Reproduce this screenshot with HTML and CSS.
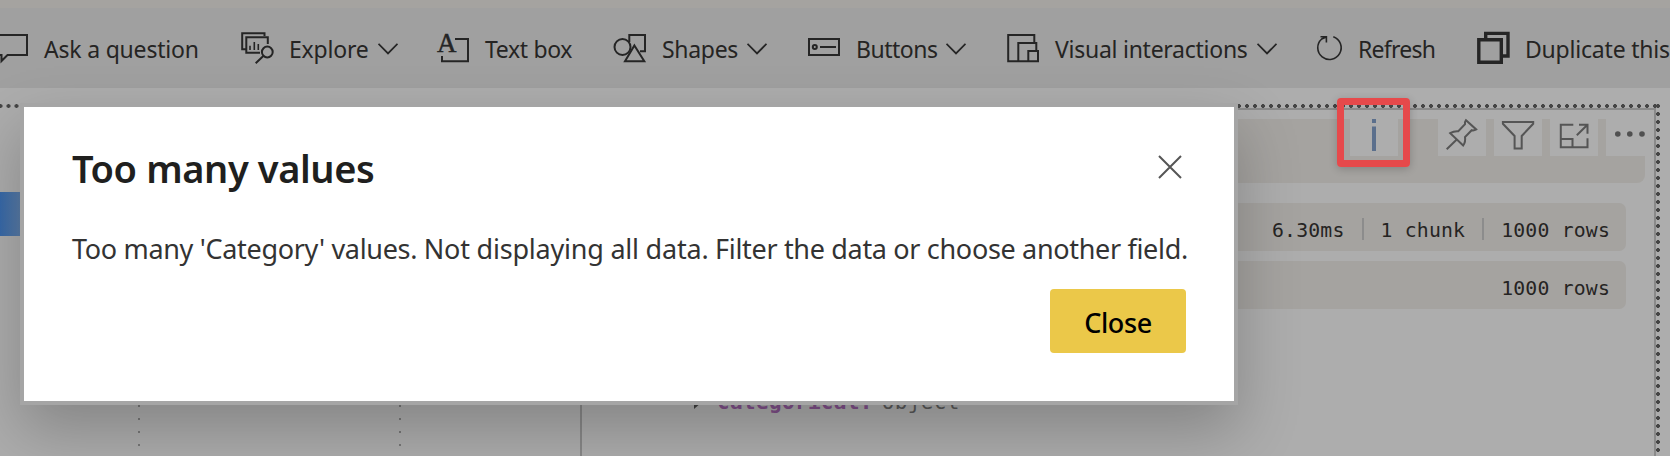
FILE: index.html
```
<!DOCTYPE html>
<html lang="en">
<head>
<meta charset="utf-8">
<title>Too many values</title>
<link rel="stylesheet" href="styles.css">
</head>
<body>
<div class="app">
  <div class="strip"></div>
  <nav class="toolbar">
    <div class="tool">
      <svg class="icon" viewBox="0 0 33 36"><path d="M1 5H31V25H11.5L5.5 31V25H1Z"/></svg>
      <span class="label ask">Ask a question</span>
    </div>
    <div class="tool">
      <svg class="icon" viewBox="0 0 33 36"><path d="M4.5 19.3H1.2V3.2H23.5V6M19 22.8H5.3V7.3H26.8V14M22.3 26L14.7 33.3"/><circle cx="26.3" cy="22" r="5.4"/><path class="thin" d="M9 20V15.7M13.3 20V12M17.3 20V14"/></svg>
      <span class="label explore">Explore</span>
      <svg class="chevron" viewBox="0 0 20 12"><path d="M.5 .8L10 10.5L19.5 .8"/></svg>
    </div>
    <div class="tool">
      <svg class="icon" viewBox="0 0 33 36"><text class="letter" x="0" y="22">A</text><path d="M18 9H31V31.2H5V26"/></svg>
      <span class="label textbox">Text box</span>
    </div>
    <div class="tool">
      <svg class="icon" viewBox="0 0 33 36"><path d="M15.3 12V5H31V21.3H26"/><circle cx="8.5" cy="17" r="8"/><path class="cover" d="M20.4 15.5L30.3 31.2H11Z"/></svg>
      <span class="label shapes">Shapes</span>
      <svg class="chevron" viewBox="0 0 20 12"><path d="M.5 .8L10 10.5L19.5 .8"/></svg>
    </div>
    <div class="tool">
      <svg class="icon" viewBox="0 0 33 36"><path d="M1 9H31V25H1ZM12 17H28"/><circle cx="6.8" cy="17" r="2"/></svg>
      <span class="label buttons">Buttons</span>
      <svg class="chevron" viewBox="0 0 20 12"><path d="M.5 .8L10 10.5L19.5 .8"/></svg>
    </div>
    <div class="tool">
      <svg class="icon" viewBox="0 0 33 36"><path d="M27.3 13V5H1.2V31.2H31V21H21.3V31M11.3 31V13H29.3V21"/></svg>
      <span class="label visual">Visual interactions</span>
      <svg class="chevron" viewBox="0 0 20 12"><path d="M.5 .8L10 10.5L19.5 .8"/></svg>
    </div>
    <div class="tool">
      <svg class="icon" viewBox="0 0 33 36"><path class="fine" d="M23.3 6.7A11.7 11.7 0 1 1 11.7 9L16.3 6.9M10.5 6.8H16.4V12.5"/></svg>
      <span class="label refresh">Refresh</span>
    </div>
    <div class="tool">
      <svg class="icon" viewBox="0 0 33 36"><path class="heavy" d="M1.8 9.8H24.3V32.2H1.8ZM8.7 9V3.4H31V26H25"/></svg>
      <span class="label duplicate">Duplicate this</span>
    </div>
  </nav>

  <main class="workspace">
    <section class="chart">
      <div class="edge-dots"></div>
      <div class="bar"></div>
      <div class="gridlines"><i></i><i></i></div>
    </section>
    <section class="tree">
      <div class="node"><svg class="caret" viewBox="0 0 8 14"><path d="M0 0L8 7L0 14Z"/></svg><b>categorical:</b><span>object</span></div>
    </section>
    <section class="visual-pane">
      <div class="pane-head">
        <div class="act info"><svg viewBox="0 0 48 46"><path d="M22 9h4v4h-4zM22 16.5h4V41h-4z"/></svg></div>
        <div class="act"><svg viewBox="0 0 48 46"><path d="M8.7 39.3L18.5 29.8M12.2 23.2Q16 20.8 20.3 21.2L27 14.2Q26.6 12 28 10.2L38.2 19.4Q36 20.8 33.7 20.2L27 27Q27.8 32 25.2 35.4Z"/></svg></div>
        <div class="act"><svg viewBox="0 0 48 46"><path d="M8.9 12H39.2V13.8L27.7 26V38.5H20.6V26L8.9 13.8Z"/></svg></div>
        <div class="act"><svg viewBox="0 0 48 46"><path d="M23.3 14.8H10.8V37.2H37.5V28.3M10.8 29H22.5V37M26.8 25.2L37.2 15M29 14.8H37.5V23.8"/></svg></div>
        <div class="act"><svg viewBox="0 0 48 46"><g class="dots"><circle cx="11.8" cy="24" r="2.8"/><circle cx="23.8" cy="24" r="2.8"/><circle cx="36" cy="24" r="2.8"/></g></svg></div>
      </div>
      <div class="stat"><span>6.30ms</span><i></i><span>1 chunk</span><i></i><span>1000 rows</span></div>
      <div class="stat"><span>1000 rows</span></div>
    </section>
    <div class="side-dots"></div>
    <div class="top-dots"></div>
  </main>

  <div class="highlight"></div>

  <div class="dialog" role="dialog">
    <header>
      <h1>Too many values</h1>
      <svg class="close-x" viewBox="0 0 24 24"><path d="M1 1L23 23M23 1L1 23"/></svg>
    </header>
    <p>Too many 'Category' values. <span>Not displaying all data.</span> Filter the data or choose another field.</p>
    <footer><button>Close</button></footer>
  </div>
</div>
</body>
</html>
```
FILE: styles.css
```
* { box-sizing: border-box; }
body { margin: 0; font-family: "Noto Sans", "Open Sans", sans-serif; color: #252423; }
svg { display: block; flex: none; fill: none; stroke: #252525; stroke-width: 2; }
.app { position: relative; width: 1670px; height: 456px; overflow: hidden; background: #adadad; display: flex; flex-direction: column; }
.strip { height: 8px; background: #a5a3a0; flex: none; }

.toolbar { height: 80px; flex: none; margin-left: -4px; background: #a0a0a0; display: grid; grid-template-columns: 245px 196px 177px 194px 199px 303px 167px 220px; overflow: hidden; }
.tool { display: flex; align-items: center; white-space: nowrap; }
.icon { width: 33px; height: 36px; overflow: visible; }
.label { margin-left: 15px; font-size: 23px; line-height: 32px; padding-top: 1px; letter-spacing: -.2px; }
.textbox { letter-spacing: -.35px; }
.shapes { letter-spacing: -.3px; }
.buttons { letter-spacing: -.5px; }
.refresh { letter-spacing: -.75px; }
.visual { letter-spacing: -.26px; }
.chevron { width: 20px; height: 12px; margin: 1px 0 0 9px; stroke-width: 1.8; }
.thin { stroke-width: 1.6; }
.fine { stroke-width: 1.6; }
.heavy { stroke-width: 3.4; }
.cover { fill: #a0a0a0; }
.letter { font: 27px "Liberation Serif", serif; fill: #252525; stroke-width: .5; }

.workspace { position: relative; flex: 1; display: grid; grid-template-columns: 580px 658px 418px; }
.chart { display: flex; flex-direction: column; padding-top: 16px; }
.edge-dots { width: 20px; height: 4px; background: radial-gradient(circle, #454545 1.7px, transparent 2.2px) -3.5px 0 / 8px 4px; }
.bar { width: 24px; height: 44px; margin-top: 84px; background: linear-gradient(90deg, #3769a9, #587ba6 20px); }
.gridlines { margin: 169px 0 0 138px; display: flex; gap: 259px; }
.gridlines i { width: 2px; height: 48px; background: repeating-linear-gradient(#777 0 2px, transparent 2px 13px); }
.tree { margin-top: 40px; border-left: 2px solid #888; padding: 258px 0 0 112px; }
.node { display: flex; align-items: center; font: 21px/32px "DejaVu Sans Mono", monospace; letter-spacing: .34px; color: #5a5a5a; white-space: nowrap; }
.node b { color: #80508a; margin-left: 15px; }
.node span { margin-left: 9px; }
.caret { width: 8px; height: 14px; fill: #404040; stroke: none; }

.visual-pane { margin-top: 20px; border-top: 2px solid #8a8a8a; border-right: 2px solid #8a8a8a; padding-right: 28px; }
.pane-head { height: 73px; margin-right: -19px; display: flex; gap: 8px; background: linear-gradient(#adadad 9px, #a5a3a0 9px); border-radius: 0 0 8px 0; }
.act { width: 48px; height: 46px; flex: none; background: #adadad; }
.act svg { width: 48px; height: 46px; stroke: #555; }
.info { margin: 0 32px 0 112px; }
.act.info svg { fill: #5b6f8c; stroke: none; }
.act .dots { fill: #505050; stroke: none; }
.stat { height: 48px; margin-top: 20px; padding: 8px 16px 0 0; background: #a5a3a0; border-radius: 0 7px 7px 0; display: flex; justify-content: flex-end; align-items: center; font: 19.8px/30px "DejaVu Sans Mono", monospace; letter-spacing: .18px; }
.stat + .stat { margin-top: 10px; }
.stat i { width: 2px; height: 22px; background: #8c8c8c; margin: 0 17px 4px; }
.top-dots { position: absolute; left: 1237px; top: 16px; width: 423px; height: 4px; background: radial-gradient(circle, #454545 1.7px, transparent 2.2px) -2px 0 / 8px 4px; }
.side-dots { position: absolute; left: 1656px; top: 14px; bottom: 0; width: 4px; background: radial-gradient(circle, #454545 1.7px, transparent 2.2px) 0 0 / 4px 8px; }

.highlight { position: absolute; left: 1337px; top: 98px; width: 73px; height: 69px; border: 7px solid #e6494b; border-radius: 4px; box-shadow: 0 2px 8px rgba(0,0,0,.2); }

.dialog { position: absolute; left: 20px; top: 103px; width: 1218px; height: 302px; border: 4px solid #a5a5a5; background: #fff; padding: 35px 48px 0 48px; box-shadow: 0 26px 58px rgba(0,0,0,.23); }
.dialog header { display: flex; justify-content: space-between; }
h1 { margin: 0; font-size: 38px; line-height: 52px; font-weight: 560; letter-spacing: -.4px; color: #201f1e; }
.close-x { width: 24px; height: 24px; margin: 13px 4px 0 0; stroke: #555; }
.dialog p { margin: 36px 0 0; font-size: 27px; line-height: 38px; letter-spacing: -.325px; color: #333; white-space: nowrap; }
.dialog p span { letter-spacing: -.22px; }
.dialog footer { display: flex; justify-content: flex-end; margin-top: 21px; }
button { width: 136px; height: 64px; border: 0; border-radius: 4px; padding: 2px 0 0; background: #ebc849; font: 540 27px "Noto Sans", sans-serif; letter-spacing: -.4px; color: #000; }
```
